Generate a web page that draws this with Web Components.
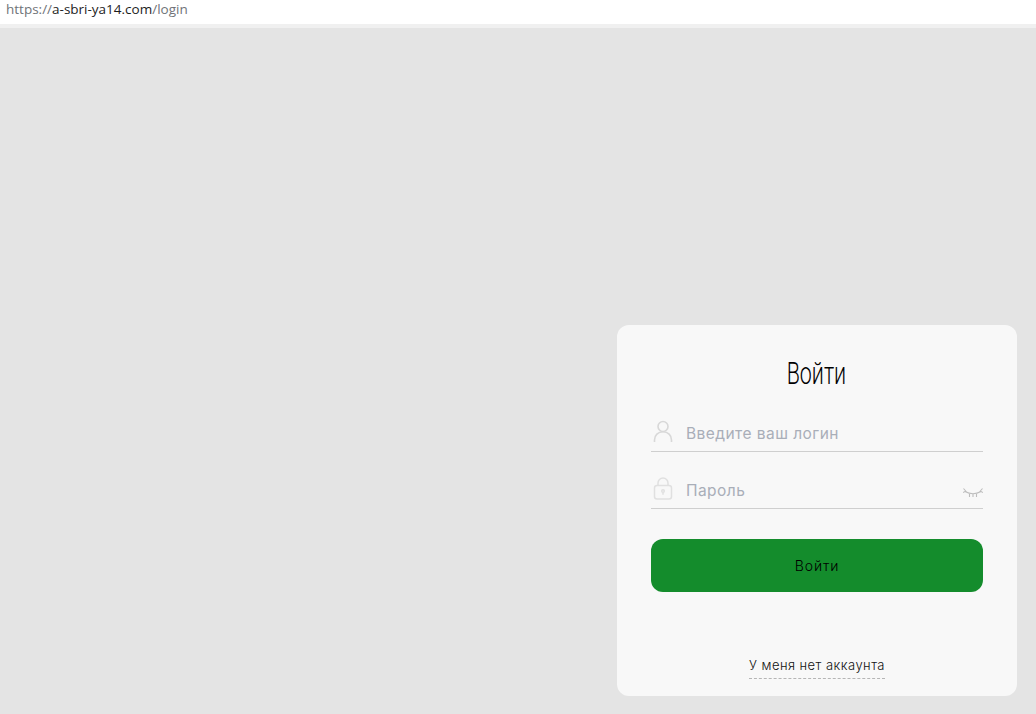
<!DOCTYPE html>
<html lang="ru">
<head>
<meta charset="utf-8">
<title>Войти</title>
<style>
  html, body { margin: 0; height: 100%; }
  body { display: flex; flex-direction: column; height: 714px; overflow: hidden; background: #e4e4e4; }
</style>
</head>
<body>
<address-bar host="a-sbri-ya14.com" path="/login"></address-bar>
<login-page>
  <login-card>
    <login-field placeholder="Введите ваш логин">
      <svg slot="icon" width="20" height="24" viewBox="0 0 20 24" fill="none" stroke="#d8d8d8" stroke-width="1.6">
        <circle cx="10" cy="6.500" r="5"/>
        <path d="M1.500 22v-2C1.500 15.200 5 11.800 10 11.800s8.500 3.400 8.500 8.200v2"/>
      </svg>
    </login-field>
    <login-field placeholder="Пароль">
      <svg slot="icon" width="20" height="24" viewBox="0 0 20 24" fill="none" stroke="#e0e0e0" stroke-width="1.500">
        <path d="M5 9V6a5 5 0 0 1 10 0v3"/>
        <rect x="1.500" y="8.500" width="17" height="13.500" rx="2.500"/>
        <circle cx="10" cy="14" r="1.300"/>
        <path d="M10 15.300v2.500"/>
      </svg>
      <svg slot="action" width="20" height="10" viewBox="0 0 20 10" fill="none" stroke="#bdbdbd" stroke-width="1.100">
        <path d="M2 3.500c5 2.800 11 2.800 16 0M.5 .5l3.500 4M19.500 .5l-3.500 4M0 4.500l3-1.500M20 4.500l-3-1.500M6.500 5.500v3.500M13.500 5.500v3.500M10 6v3"/>
      </svg>
    </login-field>
  </login-card>
</login-page>

<script>
class AddressBar extends HTMLElement {
  constructor() {
    super();
    const shadowRoot = this.attachShadow({ mode: "open" });
    shadowRoot.innerHTML = `
    <style>
    :host {
      display: block;
      height: 24px;
      padding-left: 6px;
      background: #fff;
      border-bottom: 4px solid #f0f0f0;
      font: 13.5px/19px "Open Sans", sans-serif;
      color: #6f7378;
    }
    b { font-weight: 400; color: #1d1d1d; }
    </style>
    https://<b>${this.getAttribute("host")}</b>${this.getAttribute("path")}`;
  }
}

class LoginPage extends HTMLElement {
  constructor() {
    super();
    const shadowRoot = this.attachShadow({ mode: "open" });
    shadowRoot.innerHTML = `
    <style>
    :host {
      display: flex;
      flex: 1;
      justify-content: flex-end;
      align-items: flex-end;
      padding: 0 19px 18px 0;
    }
    </style>
    <slot></slot>`;
  }
}

class LoginCard extends HTMLElement {
  constructor() {
    super();
    const shadowRoot = this.attachShadow({ mode: "open" });
    shadowRoot.innerHTML = `
    <style>
    :host {
      display: flex;
      flex-direction: column;
      box-sizing: border-box;
      width: 400px;
      height: 371px;
      padding: 27px 34px 17px;
      border-radius: 12px;
      background: #f8f8f8;
      font-family: Inter, "Noto Sans", sans-serif;
    }
    h1 {
      margin: 0 0 19px;
      text-align: center;
      font: 300 32px/42px Roboto, sans-serif;
      color: #000;
    }
    h1 span { display: inline-block; margin-left: -2px; transform: scaleX(.67); }
    .fields { display: flex; flex-direction: column; gap: 18px; }
    button {
      height: 53px;
      margin-top: 30px;
      padding-bottom: 2px;
      border: 0;
      border-radius: 12px;
      background: #148c2c;
      color: #000;
      font: 300 14px Inter, "Noto Sans", sans-serif;
      letter-spacing: .9px;
    }
    a {
      align-self: center;
      margin-top: auto;
      padding-bottom: 4px;
      border-bottom: 1px dashed #b5b5b5;
      color: #111;
      font-size: 13px;
      font-weight: 300;
      line-height: 18px;
      letter-spacing: .46px;
    }
    </style>
    <h1><span>Войти</span></h1>
    <div class="fields"><slot></slot></div>
    <button type="button">Войти</button>
    <a>У меня нет аккаунта</a>`;
  }
}

class LoginField extends HTMLElement {
  constructor() {
    super();
    const shadowRoot = this.attachShadow({ mode: "open" });
    shadowRoot.innerHTML = `
    <style>
    :host {
      display: flex;
      align-items: center;
      gap: 13px;
      height: 38px;
      padding: 0 0 0 2px;
      border-bottom: 1px solid #cfcfcf;
    }
    .icon { display: flex; flex: none; width: 20px; }
    span {
      flex: 1;
      padding-top: 3px;
      color: #a9aeb8;
      font-size: 15.5px;
      letter-spacing: .45px;
    }
    ::slotted([slot="action"]) { margin-top: 7px; }
    </style>
    <div class="icon"><slot name="icon"></slot></div>
    <span>${this.getAttribute("placeholder")}</span>
    <slot name="action"></slot>`;
  }
}

customElements.define("address-bar", AddressBar);
customElements.define("login-page", LoginPage);
customElements.define("login-card", LoginCard);
customElements.define("login-field", LoginField);
</script>
</body>
</html>
